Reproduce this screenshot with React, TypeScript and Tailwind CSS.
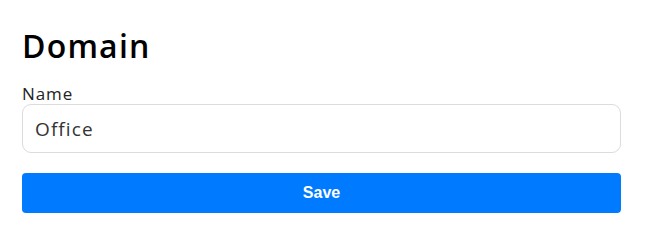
export default function App() {
  return (
    <div className="bg-white w-[651px] h-[245px] px-[22px] pt-[26px] font-['Open_Sans',sans-serif]">
      <h1 className="text-[32px] leading-[40px] font-semibold tracking-[1.2px] text-black">Domain</h1>
      <form className="mt-[18px] flex flex-col" onSubmit={(e) => e.preventDefault()}>
        <label className="text-[17px] leading-[19px] tracking-[0.9px] text-[#222]">Name</label>
        <input
          defaultValue="Office"
          className="mt-[1px] h-[49px] w-[599px] rounded-[9px] border border-[#dcdcdc] px-[12px] text-[19px] tracking-[1.1px] text-[#333] outline-none"
        />
        <button
          type="submit"
          className="mt-[20px] h-[40px] w-[599px] rounded-[4px] bg-[#007bff] text-[16px] font-bold text-white font-['Liberation_Sans',Arial,sans-serif]"
        >
          Save
        </button>
      </form>
    </div>
  );
}
